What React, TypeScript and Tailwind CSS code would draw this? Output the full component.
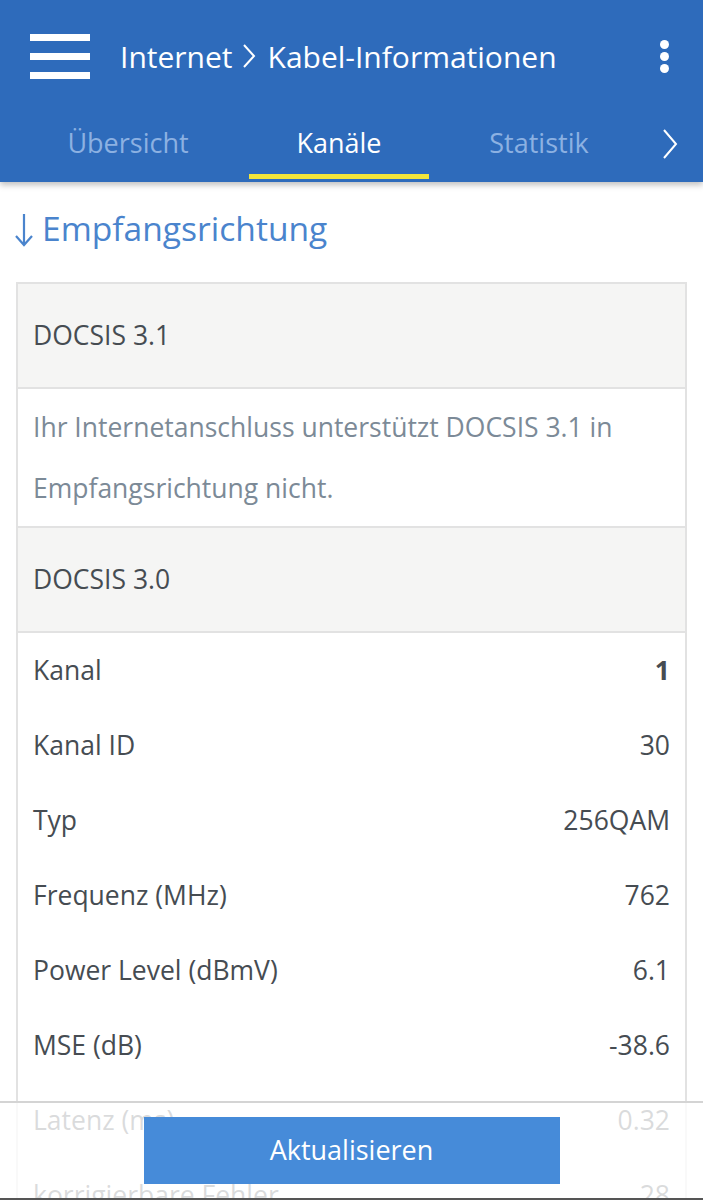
const rows: [string, string, boolean?][] = [
  ["Kanal", "1", true],
  ["Kanal ID", "30"],
  ["Typ", "256QAM"],
  ["Frequenz (MHz)", "762"],
  ["Power Level (dBmV)", "6.1"],
  ["MSE (dB)", "-38.6"],
  ["Latenz (ms)", "0.32"],
  ["korrigierbare Fehler", "28"],
];

const App = () => {
  return (
    <div className="relative w-[703px] h-[1200px] overflow-hidden bg-white font-['Open_Sans','Noto_Sans',sans-serif]">
      <header className="relative z-10 bg-[#2e6bbb] h-[182px] shadow-[0_3px_6px_rgba(0,0,0,0.25)]">
        <div className="flex items-center h-[112px] pl-[30px] pr-[34px]">
          <div className="flex flex-col gap-[12px] w-[60px]">
            <span className="block h-[7px] bg-white" />
            <span className="block h-[7px] bg-white" />
            <span className="block h-[7px] bg-white" />
          </div>
          <div className="ml-[30px] flex items-center text-white text-[30px]">
            <span>Internet</span>
            <svg className="ml-[9px] mr-[12px]" width="14" height="26" viewBox="0 0 14 26" fill="none">
              <path d="M2 2 L12 13 L2 24" stroke="white" strokeWidth="2" />
            </svg>
            <span>Kabel-Informationen</span>
          </div>
          <div className="ml-auto flex flex-col gap-[3px]">
            <span className="block w-[9px] h-[9px] rounded-full bg-white" />
            <span className="block w-[9px] h-[9px] rounded-full bg-white" />
            <span className="block w-[9px] h-[9px] rounded-full bg-white" />
          </div>
        </div>
        <div className="flex items-stretch h-[70px] pl-[23px] text-[27px]">
          <div className="w-[210px] flex items-center justify-center pb-[8px] text-[#8cb1e2]">Übersicht</div>
          <div className="relative w-[212px] flex items-center justify-center pb-[8px] text-white">
            Kanäle
            <span className="absolute bottom-[3px] left-[16px] w-[180px] h-[5px] bg-[#f2e53a]" />
          </div>
          <div className="w-[188px] flex items-center justify-center pb-[8px] text-[#8cb1e2]">Statistik</div>
          <div className="ml-[29px] flex items-center pb-[6px]">
            <svg width="16" height="32" viewBox="0 0 16 32" fill="none">
              <path d="M2 2 L14 16 L2 30" stroke="white" strokeWidth="2" />
            </svg>
          </div>
        </div>
      </header>

      <div className="pt-[24px] pl-[14px] h-[100px] flex items-start text-[#4a84cd]">
        <svg className="mt-[7px]" width="20" height="34" viewBox="0 0 20 34" fill="none">
          <path d="M10 1 V32 M2 23 L10 32 L18 23" stroke="#4a84cd" strokeWidth="2.2" />
        </svg>
        <span className="ml-[8px] text-[33.6px] leading-[44px]">Empfangsrichtung</span>
      </div>

      <div className="mx-[16px] border-2 border-[#e2e2e2] text-[26.5px] text-[#464c52]">
        <div className="h-[105px] bg-[#f5f5f4] flex items-center px-[15px] border-b-2 border-[#e2e2e2]">
          DOCSIS 3.1
        </div>
        <div className="px-[15px] pt-[8px] pb-[7px] leading-[61px] text-[#7c8a97] border-b-2 border-[#e2e2e2]">
          Ihr Internetanschluss unterstützt DOCSIS 3.1 in Empfangsrichtung nicht.
        </div>
        <div className="h-[105px] bg-[#f5f5f4] flex items-center px-[15px] border-b-2 border-[#e2e2e2]">
          DOCSIS 3.0
        </div>
        {rows.map(([label, value, bold]) => (
          <div key={label} className="h-[75px] flex items-center justify-between px-[15px]">
            <span>{label}</span>
            <span className={bold ? "font-bold" : ""}>{value}</span>
          </div>
        ))}
      </div>

      <div className="absolute left-0 right-0 top-[1101px] bottom-0 z-20 bg-white/80 border-t-2 border-[#d4d4d4] border-b-2 border-b-[#555]">
        <div className="mt-[14px] mx-auto w-[416px] h-[67px] bg-[#468bd9] flex items-center justify-center text-white text-[27px]">
          Aktualisieren
        </div>
      </div>
    </div>
  );
};

export default App;
